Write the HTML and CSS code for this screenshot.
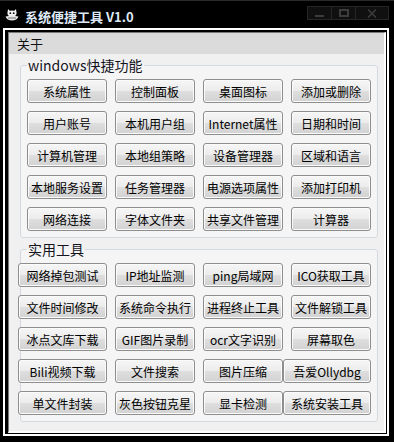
FILE: index.html
```html
<!DOCTYPE html>
<html lang="zh-CN">
<head>
    <meta charset="UTF-8">
    <meta name="viewport" content="width=device-width, initial-scale=1.0">
    <title>系统便捷工具 V1.0</title>
    <link rel="stylesheet" href="styles.css">
</head>
<body>
    <!-- Barre de titre -->
    <div class="titlebar">
        <svg class="app-icon" viewBox="0 0 14 14" xmlns="http://www.w3.org/2000/svg">
            <path d="M3 2 L5 4 L9 4 L11 2 L11.5 6 L2.5 6 Z" fill="#f2f2f2"></path>
            <ellipse cx="7" cy="6.5" rx="4.5" ry="3" fill="#f2f2f2"></ellipse>
            <circle cx="5.3" cy="6.2" r="0.9" fill="#111"></circle>
            <circle cx="8.7" cy="6.2" r="0.9" fill="#111"></circle>
            <path d="M0.5 9.5 Q7 8 13.5 9.5 Q12 13.5 7 13.5 Q2 13.5 0.5 9.5 Z" fill="#e6e6e6"></path>
            <path d="M3 11 H11" stroke="#555" stroke-width="0.8"></path>
        </svg>
        <span class="title">系统便捷工具 V1.0</span>
        <div class="controls">
            <span class="ctl ctl-min"><i></i></span>
            <span class="ctl ctl-max"><i></i></span>
            <span class="ctl ctl-close">
                <svg viewBox="0 0 10 9" xmlns="http://www.w3.org/2000/svg">
                    <path d="M1 0.5 L9 8.5 M9 0.5 L1 8.5" stroke="#3c3c3c" stroke-width="1.6"></path>
                </svg>
            </span>
        </div>
    </div>

    <div class="frame">
        <div class="client">
            <div class="menubar">
                <span class="menu-item">关于</span>
            </div>

            <div class="panel">
                <fieldset class="group">
                    <legend>windows快捷功能</legend>
                    <div class="grid">
                        <button>系统属性</button>
                        <button>控制面板</button>
                        <button>桌面图标</button>
                        <button>添加或删除</button>
                        <button>用户账号</button>
                        <button>本机用户组</button>
                        <button>Internet属性</button>
                        <button>日期和时间</button>
                        <button>计算机管理</button>
                        <button>本地组策略</button>
                        <button>设备管理器</button>
                        <button>区域和语言</button>
                        <button>本地服务设置</button>
                        <button>任务管理器</button>
                        <button>电源选项属性</button>
                        <button>添加打印机</button>
                        <button>网络连接</button>
                        <button>字体文件夹</button>
                        <button>共享文件管理</button>
                        <button>计算器</button>
                    </div>
                </fieldset>

                <fieldset class="group">
                    <legend>实用工具</legend>
                    <div class="grid">
                        <button class="wide-left">网络掉包测试</button>
                        <button>IP地址监测</button>
                        <button>ping局域网</button>
                        <button>ICO获取工具</button>
                        <button class="wide-left">文件时间修改</button>
                        <button>系统命令执行</button>
                        <button>进程终止工具</button>
                        <button>文件解锁工具</button>
                        <button class="wide-left">冰点文库下载</button>
                        <button>GIF图片录制</button>
                        <button>ocr文字识别</button>
                        <button>屏幕取色</button>
                        <button class="wide-left">Bili视频下载</button>
                        <button>文件搜索</button>
                        <button>图片压缩</button>
                        <button class="wide-right">吾爱Ollydbg</button>
                        <button class="wide-left">单文件封装</button>
                        <button>灰色按钮克星</button>
                        <button>显卡检测</button>
                        <button class="wide-right">系统安装工具</button>
                    </div>
                </fieldset>
            </div>
        </div>
    </div>
</body>
</html>
```

FILE: styles.css
```css
* {
    margin: 0;
    padding: 0;
    box-sizing: border-box;
}

body {
    width: 394px;
    height: 442px;
    background-color: #000;
    font-family: "Noto Sans CJK SC", "Noto Sans", sans-serif;
    overflow: hidden;
}

/* Barre de titre */
.titlebar {
    height: 28px;
    display: flex;
    align-items: flex-start;
    border-top: 1px solid #2a2a2a;
}

.app-icon {
    width: 14px;
    height: 14px;
    margin: 6px 0 0 5px;
}

.title {
    margin: 8px 0 0 6px;
    font-size: 13px;
    line-height: 16px;
    font-weight: 700;
    color: #dfe9f6;
    text-shadow: 0 0 2px #000, 0 0 3px #000;
}

.controls {
    margin: 5px 5px 0 auto;
    display: flex;
    height: 14px;
    border: 1px solid #262626;
    background-color: #101010;
}

.ctl {
    height: 100%;
    display: flex;
    justify-content: center;
    align-items: center;
    border-right: 1px solid #262626;
}

.ctl-min {
    width: 24px;
}

.ctl-min i {
    width: 9px;
    height: 2px;
    margin-top: 5px;
    background-color: #3c3c3c;
}

.ctl-max {
    width: 24px;
}

.ctl-max i {
    width: 10px;
    height: 8px;
    border: 2px solid #3c3c3c;
    border-top-width: 2px;
}

.ctl-close {
    width: 32px;
    border-right: none;
}

.ctl-close svg {
    width: 10px;
    height: 9px;
}

/* Cadre de la fenêtre */
.frame {
    margin-left: 3px;
    width: 386px;
    height: 408px;
    border: 2px solid #fff;
    background-color: #000;
    padding: 2px 1px 1px 3px;
}

.client {
    height: 100%;
    border-left: 1px solid #7a7a7a;
    border-top: 1px solid #7a7a7a;
    border-right: 2px solid #fff;
    border-bottom: 2px solid #fff;
    background-color: #f0f0f0;
}

.menubar {
    height: 21px;
    background-color: #dbdbdb;
    padding-left: 8px;
    display: flex;
    align-items: center;
}

.menu-item {
    font-size: 13px;
    line-height: 16px;
    color: #111;
}

.panel {
    padding: 3px 7px 0 11px;
}

/* Group box */
.group {
    border: 1px solid #d3d9de;
    border-radius: 3px;
    padding: 0 6px 6px 6px;
    background-color: #f5f5f5;
    margin-bottom: 3px;
}

.group + .group {
    padding-bottom: 6px;
}

.group legend {
    font-size: 14px;
    line-height: 16px;
    padding: 0 1px;
    color: #14141e;
}

.grid {
    margin-top: 6px;
    display: grid;
    grid-template-columns: repeat(4, 80px);
    grid-auto-rows: 24px;
    gap: 8px;
}

button {
    font-family: "Noto Sans CJK SC", "Noto Sans", sans-serif;
    font-size: 12px;
    color: #000;
    border: 1px solid #8e8e8e;
    border-radius: 3px;
    background: linear-gradient(#f6f6f6, #ececec 48%, #dedede 52%, #d2d2d2);
    box-shadow: inset 0 0 0 1px #fbfbfb;
    white-space: nowrap;
    overflow: hidden;
    cursor: pointer;
}

button:hover {
    background: linear-gradient(#eaf6fd, #d9f0fc 48%, #bee6fd 52%, #a7d9f5);
    border-color: #3c7fb1;
}

.wide-left {
    margin-left: -9px;
}

.wide-right {
    margin-left: -8px;
}
```
